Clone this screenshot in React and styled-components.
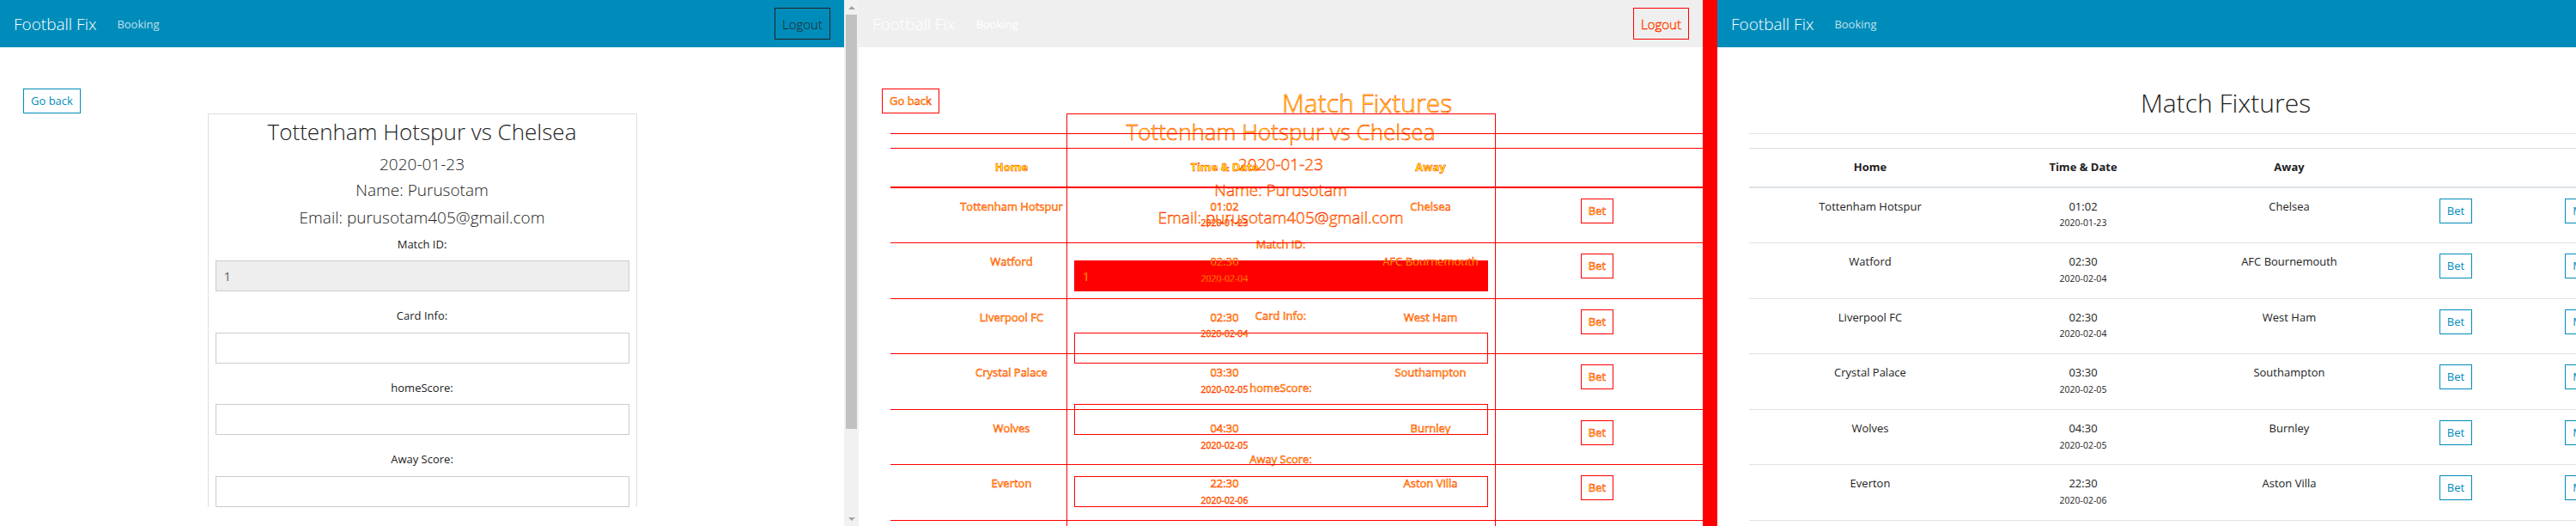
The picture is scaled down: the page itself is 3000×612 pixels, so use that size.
import React from 'react';
import styled, { createGlobalStyle, css, ThemeProvider } from 'styled-components';

const GlobalStyle = createGlobalStyle`
  html, body {
    margin: 0;
    padding: 0;
  }

  body {
    font-family: 'Open Sans', 'Liberation Sans', sans-serif;
    color: #222;
    background: #fff;
  }

  * {
    box-sizing: border-box;
  }
`;

const BLUE = '#008cba';
const RED = '#ff0000';

// the middle screen is a pixel diff of the two pages: changed pixels red, edges yellow
const diffText = css`
  color: #ffff00;
  -webkit-text-stroke: 0.45px ${RED};
`;

const pick = (normal, diff) => (p) => (p.theme.diff ? diff : normal);

const Screens = styled.div`
  display: flex;
  width: 3000px;
  height: 612px;
  overflow: hidden;
`;

const Panel = styled.section`
  flex: none;
  display: flex;
  width: 1000px;
  height: 612px;
  overflow: hidden;
  background: #fff;
`;

const Viewport = styled.div`
  flex: 1;
  min-width: 0;
  display: flex;
  flex-direction: column;
  overflow: hidden;
`;

const Layers = styled.div`
  flex: 1;
  min-height: 0;
  display: grid;
  overflow: hidden;

  & > * {
    grid-area: 1 / 1;
  }
`;

const DiffGutter = styled.div`
  flex: none;
  width: 17px;
  background: ${RED};
`;

const ScrollTrack = styled.div`
  flex: none;
  width: 17px;
  display: flex;
  flex-direction: column;
  align-items: center;
  background: #f1f1f1;
`;

const ScrollArrow = styled.div`
  flex: none;
  width: 100%;
  height: 17px;
  display: flex;
  align-items: center;
  justify-content: center;

  &::before {
    content: '';
    border-left: 4px solid transparent;
    border-right: 4px solid transparent;
    ${(p) => (p.$down ? 'border-top: 4px solid #a3a3a3;' : 'border-bottom: 4px solid #a3a3a3;')}
  }
`;

const ScrollThumb = styled.div`
  flex: none;
  width: 13px;
  height: 482px;
  background: #c1c1c1;
`;

const ScrollSpacer = styled.div`
  flex: 1;
`;

const NavBar = styled.nav`
  flex: none;
  height: 55px;
  display: flex;
  align-items: center;
  padding: 0 16px;
  background: ${pick(BLUE, '#efefef')};
`;

const Brand = styled.a`
  font-size: 19px;
  font-weight: 300;
  color: #fff;
  text-decoration: none;
  white-space: nowrap;
  margin-right: 24px;
`;

const NavLink = styled.a`
  font-size: 13px;
  color: ${pick('rgba(255, 255, 255, 0.75)', '#fff')};
  text-decoration: none;
`;

const LogoutButton = styled.button`
  margin-left: auto;
  height: 37px;
  padding: 0 8px;
  font-family: inherit;
  font-size: 15px;
  font-weight: 300;
  background: transparent;
  border: 1px solid ${pick('#222', RED)};
  color: #222;
  ${(p) => p.theme.diff && diffText}
`;

const OutlineButton = styled.button`
  flex: none;
  height: 29px;
  padding: 0 8px;
  font-family: inherit;
  font-size: 13px;
  line-height: 27px;
  white-space: nowrap;
  background: transparent;
  border: 1px solid ${pick(BLUE, RED)};
  color: ${BLUE};
  ${(p) => p.theme.diff && diffText}
`;

/* booking page */

const BookingBody = styled.main`
  width: 983px;
  display: flex;
  flex-direction: column;
  padding-top: 48px;
`;

const GoBack = styled(OutlineButton)`
  align-self: flex-start;
  margin-left: 27px;
`;

const Card = styled.div`
  flex: 1;
  width: 500px;
  margin: 0 auto;
  padding: 5px 8px 0;
  text-align: center;
  border: 1px solid ${pick('#dfdfdf', RED)};
  border-bottom: none;
`;

const CardTitle = styled.h3`
  margin: 0;
  font-size: 26px;
  font-weight: 300;
  line-height: 1.2;
  ${(p) => p.theme.diff && diffText}
`;

const CardLine = styled.h5`
  margin: ${(p) => p.$gap}px 0 0;
  font-size: 19px;
  font-weight: 300;
  line-height: 1.2;
  ${(p) => p.theme.diff && diffText}
`;

const Field = styled.div`
  margin-top: ${(p) => (p.$first ? 10 : 19)}px;
`;

const FieldLabel = styled.label`
  display: block;
  margin-bottom: 9px;
  font-size: 13px;
  line-height: 19.5px;
  ${(p) => p.theme.diff && diffText}
`;

const FieldInput = styled.input`
  display: block;
  width: 100%;
  height: 36px;
  padding: 0 9px;
  font-family: inherit;
  font-size: 15px;
  color: #666;
  border: 1px solid ${pick('#ccc', RED)};
  border-radius: 0;
  outline: none;
  background: ${(p) => (p.theme.diff ? (p.readOnly ? RED : 'transparent') : p.readOnly ? '#eee' : '#fff')};
  ${(p) => p.theme.diff && diffText}
`;

const BookingPage = () => (
  <BookingBody>
    <GoBack>Go back</GoBack>
    <Card>
      <CardTitle>Tottenham Hotspur vs Chelsea</CardTitle>
      <CardLine $gap={11}>2020-01-23</CardLine>
      <CardLine $gap={7.5}>Name: Purusotam</CardLine>
      <CardLine $gap={8.5}>Email: purusotam405@gmail.com</CardLine>
      <Field $first>
        <FieldLabel>Match ID:</FieldLabel>
        <FieldInput value="1" readOnly />
      </Field>
      <Field>
        <FieldLabel>Card Info:</FieldLabel>
        <FieldInput defaultValue="" />
      </Field>
      <Field>
        <FieldLabel>homeScore:</FieldLabel>
        <FieldInput defaultValue="" />
      </Field>
      <Field>
        <FieldLabel>Away Score:</FieldLabel>
        <FieldInput defaultValue="" />
      </Field>
    </Card>
  </BookingBody>
);

/* fixtures page */

const fixtures = [
  { home: 'Tottenham Hotspur', time: '01:02', date: '2020-01-23', away: 'Chelsea' },
  { home: 'Watford', time: '02:30', date: '2020-02-04', away: 'AFC Bournemouth' },
  { home: 'Liverpool FC', time: '02:30', date: '2020-02-04', away: 'West Ham' },
  { home: 'Crystal Palace', time: '03:30', date: '2020-02-05', away: 'Southampton' },
  { home: 'Wolves', time: '04:30', date: '2020-02-05', away: 'Burnley' },
  { home: 'Everton', time: '22:30', date: '2020-02-06', away: 'Aston Villa' },
];

const FixturesBody = styled.main`
  width: 1184px;
  padding-top: 47px;
`;

const PageTitle = styled.h1`
  margin: 0 0 17px;
  text-align: center;
  font-size: 30px;
  font-weight: 300;
  line-height: 1.2;
  ${(p) => p.theme.diff && diffText}
`;

const Table = styled.div`
  width: 1110px;
  margin-left: 37px;
  font-size: 13px;
  border-bottom: 1px solid ${pick('#dee2e6', RED)};
`;

const Row = styled.div`
  display: grid;
  grid-template-columns: 282px 214px 266px 122px 226px;
  align-items: start;
  border-top: ${(p) => (p.$flush ? 'none' : `1px solid ${p.theme.diff ? RED : '#dee2e6'}`)};
  border-bottom: ${(p) => (p.$head ? `2px solid ${p.theme.diff ? RED : '#dee2e6'}` : 'none')};
  min-height: ${(p) => (p.$spacer ? '17px' : 'auto')};
`;

const Cell = styled.div`
  display: flex;
  flex-direction: column;
  align-items: center;
  padding: 12px;
  text-align: center;
  line-height: ${(p) => (p.$head ? '19.5px' : '19.8px')};
  font-weight: ${(p) => (p.$head ? 700 : 400)};
  ${(p) => p.theme.diff && diffText}
`;

const DateText = styled.small`
  font-size: 10.5px;
`;

const FixturesPage = () => (
  <FixturesBody>
    <PageTitle>Match Fixtures</PageTitle>
    <Table>
      <Row $spacer />
      <Row $head>
        <Cell $head>Home</Cell>
        <Cell $head>Time &amp; Date</Cell>
        <Cell $head>Away</Cell>
        <Cell $head />
        <Cell $head />
      </Row>
      {fixtures.map((f, i) => (
        <Row key={f.home} $flush={i === 0}>
          <Cell>{f.home}</Cell>
          <Cell>
            <span>{f.time}</span>
            <DateText>{f.date}</DateText>
          </Cell>
          <Cell>{f.away}</Cell>
          <Cell>
            <OutlineButton>Bet</OutlineButton>
          </Cell>
          <Cell>
            <OutlineButton>More details</OutlineButton>
          </Cell>
        </Row>
      ))}
    </Table>
  </FixturesBody>
);

const Scrollbar = () => (
  <ScrollTrack>
    <ScrollArrow />
    <ScrollThumb />
    <ScrollSpacer />
    <ScrollArrow $down />
  </ScrollTrack>
);

const Header = ({ logout }) => (
  <NavBar>
    <Brand>Football Fix</Brand>
    <NavLink>Booking</NavLink>
    {logout && <LogoutButton>Logout</LogoutButton>}
  </NavBar>
);

const App = () => (
  <ThemeProvider theme={{ diff: false }}>
    <GlobalStyle />
    <Screens>
      <Panel>
        <Viewport>
          <Header logout />
          <BookingPage />
        </Viewport>
        <Scrollbar />
      </Panel>

      <ThemeProvider theme={{ diff: true }}>
        <Panel>
          <Viewport>
            <Header logout />
            <Layers>
              <BookingPage />
              <FixturesPage />
            </Layers>
          </Viewport>
          <DiffGutter />
        </Panel>
      </ThemeProvider>

      <Panel>
        <Viewport>
          <Header />
          <FixturesPage />
        </Viewport>
      </Panel>
    </Screens>
  </ThemeProvider>
);

export default App;
